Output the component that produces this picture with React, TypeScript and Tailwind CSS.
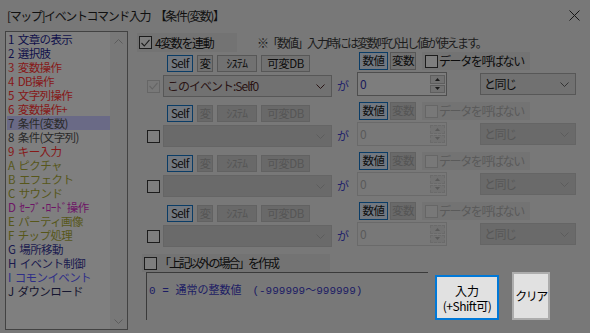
import React from 'react';

const NAVY = 'text-[#10104a]';
const RED = 'text-[#861818]';
const OLIVE = 'text-[#57571a]';

const commands: [string, string][] = [
  ['1 文章の表示', NAVY],
  ['2 選択肢', NAVY],
  ['3 変数操作', RED],
  ['4 DB操作', RED],
  ['5 文字列操作', RED],
  ['6 変数操作+', RED],
  ['7 条件(変数)', 'text-[#2a2a2a]'],
  ['8 条件(文字列)', 'text-[#2a2a2a]'],
  ['9 キー入力', RED],
  ['A ピクチャ', OLIVE],
  ['B エフェクト', OLIVE],
  ['C サウンド', OLIVE],
  ['D ｾｰﾌﾞ･ﾛｰﾄﾞ操作', 'text-[#6e1466]'],
  ['E パーティ画像', OLIVE],
  ['F チップ処理', OLIVE],
  ['G 場所移動', 'text-[#1a1a4e]'],
  ['H イベント制御', 'text-[#1a1a4e]'],
  ['I コモンイベント', 'text-[#2e2e88]'],
  ['J ダウンロード', 'text-[#161630]'],
];

function Chevron({ className }: { className?: string }) {
  return (
    <svg width="9" height="5" viewBox="0 0 9 5" className={className}>
      <path d="M0.5 0.5 L4.5 4.5 L8.5 0.5" fill="none" stroke="currentColor" strokeWidth="1" />
    </svg>
  );
}

function CheckBox({ checked, disabled }: { checked?: boolean; disabled?: boolean }) {
  return (
    <div
      className={
        'flex h-[13px] w-[13px] shrink-0 items-center justify-center border ' +
        (disabled ? 'border-[#666] bg-[#787878] text-[#656565]' : 'border-[#1c1c1c] bg-[#7e7e7e] text-[#1c1c1c]')
      }
    >
      {checked && (
        <svg width="9" height="8" viewBox="0 0 9 8">
          <path d="M0.5 4 L3.3 7 L8.5 0.8" fill="none" stroke="currentColor" strokeWidth="1.1" />
        </svg>
      )}
    </div>
  );
}

function Btn({ label, w, state }: { label: string; w: string; state: 'sel' | 'on' | 'off' }) {
  const look =
    state === 'sel'
      ? 'border-[#0a3c66] bg-[#727880] text-[#0c0c0c]'
      : state === 'on'
        ? 'border-[#575757] bg-[#717171] text-[#0c0c0c]'
        : 'border-[#626262] bg-[#696969] text-[#555]';
  return (
    <div className={'flex h-full items-center justify-center border text-[11.5px] tracking-[-0.5px] ' + look + ' ' + w}>
      {label}
    </div>
  );
}

function Spin({ disabled }: { disabled: boolean }) {
  const box = disabled
    ? 'border-[#6a6a6a] border-dashed bg-[#727272] text-[#5a5a5a]'
    : 'border-[#5e5e5e] bg-[#727272] text-[#1a1a1a]';
  return (
    <div className="flex w-[16px] flex-col gap-[1px] py-[2px] pr-[1px]">
      <div className={'flex flex-1 items-center justify-center border ' + box}>
        <svg width="5" height="3" viewBox="0 0 5 3">
          <path d="M0 3 L2.5 0 L5 3Z" fill="currentColor" />
        </svg>
      </div>
      <div className={'flex flex-1 items-center justify-center border ' + box}>
        <svg width="5" height="3" viewBox="0 0 5 3">
          <path d="M0 0 L2.5 3 L5 0Z" fill="currentColor" />
        </svg>
      </div>
    </div>
  );
}

function ConditionRow({ first }: { first?: boolean }) {
  const on = !!first;
  return (
    <div className="flex h-[50px]">
      <div className="flex w-[220px] flex-col">
        <div className="mt-[3px] flex h-[17px] gap-[4px] pl-[30px]">
          <Btn label="Self" w="w-[26px]" state="sel" />
          <Btn label="変" w="w-[16px]" state={on ? 'on' : 'off'} />
          <Btn label="ｼｽﾃﾑ" w="w-[40px]" state={on ? 'on' : 'off'} />
          <Btn label="可変DB" w="w-[49px]" state={on ? 'on' : 'off'} />
        </div>
        <div className="mt-[3px] flex h-[22px] items-center pl-[10px]">
          <CheckBox checked={first} disabled={first} />
          <div
            className={
              'ml-[3px] flex h-[22px] w-[169px] items-center justify-between border pr-[6px] pl-[3px] ' +
              (on ? 'border-[#575757] bg-[#717171] text-[#2a1414]' : 'border-[#656565] bg-[#6a6a6a] text-[#5c5c5c]')
            }
          >
            <span className="text-[12px] tracking-[-1px]">{on ? 'このイベント:Self0' : ''}</span>
            <Chevron />
          </div>
          <span className="ml-[5px] text-[12px] text-[#20206a]">が</span>
        </div>
      </div>
      <div className="flex flex-col">
        <div className="flex h-[18px] gap-[2px] pl-[2px]">
          <Btn label="数値" w="w-[29px]" state="sel" />
          <Btn label="変数" w="w-[26px]" state={on ? 'on' : 'off'} />
          <div className="ml-[4px] flex w-[108px] items-center gap-[1px] bg-[#737373] pl-[3px]">
            <CheckBox disabled={!on} />
            <span
              className={'text-[12px] tracking-[-1.4px] whitespace-nowrap ' + (on ? 'text-[#0c0c0c]' : 'text-[#5a5a5a]')}
            >
              データを呼ばない
            </span>
          </div>
        </div>
        <div className="mt-[2px] flex items-start">
          <div
            className={
              'flex h-[24px] w-[90px] border ' +
              (on ? 'border-[#4e4e4e] bg-[#7d7d7d]' : 'border-[#6a6a6a] bg-[#787878]')
            }
          >
            <span className={'flex-1 pt-[2px] pl-[2px] text-[12px] ' + (on ? 'text-[#1a1a5a]' : 'text-[#5a5a5a]')}>0</span>
            <Spin disabled={!on} />
          </div>
          <div
            className={
              'mt-[1px] ml-[33px] flex h-[22px] w-[96px] items-center justify-between border pr-[6px] pl-[3px] ' +
              (on ? 'border-[#575757] bg-[#717171] text-[#0c0c0c]' : 'border-[#656565] bg-[#6a6a6a] text-[#575757]')
            }
          >
            <span className="text-[12px] tracking-[-1.5px]">と同じ</span>
            <Chevron className={on ? 'text-[#333]' : 'text-[#5c5c5c]'} />
          </div>
        </div>
      </div>
    </div>
  );
}

export default function App() {
  return (
    <div
      className="flex h-[333px] w-[590px] flex-col overflow-hidden bg-[#787878] text-[#0c0c0c]"
      style={{ fontFamily: '"Noto Sans CJK JP", "Noto Sans", sans-serif' }}
    >
      <div className="flex h-[31px] items-center justify-between pr-[10px] pl-[7px]">
        <span className="text-[12px] tracking-[-1.4px] text-[#101010]">[マップ]イベントコマンド入力　【条件(変数)】</span>
        <svg width="11" height="11" viewBox="0 0 11 11" className="text-[#161616]">
          <path d="M0.5 0.5 L10.5 10.5 M10.5 0.5 L0.5 10.5" stroke="currentColor" strokeWidth="1" />
        </svg>
      </div>
      <div className="flex flex-1">
        <div className="ml-[5px] flex h-[299px] w-[123px] border border-[#424242] bg-[#7f7f7f]">
          <div className="flex flex-1 flex-col pl-[1px]">
            {commands.map(([label, color], i) => (
              <div
                key={label}
                className={
                  'h-[14px] pl-[1px] text-[11.5px] leading-[14px] tracking-[-0.6px] whitespace-pre ' +
                  color +
                  (i === 6 ? ' bg-[#6a6a86]' : '')
                }
              >
                {label.replace(' ', '  ')}
              </div>
            ))}
          </div>
          <div className="flex w-[17px] flex-col items-center justify-between bg-[#787878] pt-[7px] pb-[5px] text-[#5c5c5c]">
            <Chevron className="rotate-180" />
            <Chevron />
          </div>
        </div>
        <div className="ml-[9px] flex flex-1 flex-col">
          <div className="mt-[2px] flex h-[19px] items-center">
            <div className="flex h-full w-[100px] items-center gap-[3px] bg-[#737373] pl-[2px]">
              <CheckBox checked />
              <span className="text-[12px] tracking-[-1.4px]">4変数を連動</span>
            </div>
            <span className="ml-[20px] text-[12px] tracking-[-2px] text-[#1c1c1c]">
              ※「数値」入力時には変数呼び出し値が使えます。
            </span>
          </div>
          <ConditionRow first />
          <ConditionRow />
          <ConditionRow />
          <ConditionRow />
          <div className="mt-[2px] ml-[5px] flex h-[18px] w-[188px] items-center gap-[2px] bg-[#737373] pl-[2px]">
            <CheckBox />
            <span className="text-[12px] tracking-[-2.1px]">「上記以外の場合」を作成</span>
          </div>
          <div className="flex">
            <div className="ml-[9px] h-[48px] w-[282px] border-t border-l border-[#3a3a3a] pt-[2px] pl-[2px]">
              <span
                className="text-[11px] whitespace-pre text-[#1c1c64]"
                style={{ fontFamily: '"Liberation Mono", "Noto Sans CJK JP", monospace' }}
              >
                0 = 通常の整数値　(-999999～999999)
              </span>
            </div>
            <div className="mt-[3px] ml-[7px] flex h-[45px] w-[64px] flex-col items-center justify-center border-2 border-[#0078d7] bg-[#e1e1e1] text-[12px] leading-[15px] text-black">
              <span>入力</span>
              <span className="tracking-[-0.5px]">(+Shift可)</span>
            </div>
            <div className="ml-[13px] flex h-[48px] w-[38px] items-center justify-center border-2 border-[#adadad] bg-[#e1e1e1] text-[12px] tracking-[-1.5px] text-black">
              クリア
            </div>
          </div>
        </div>
      </div>
    </div>
  );
}
